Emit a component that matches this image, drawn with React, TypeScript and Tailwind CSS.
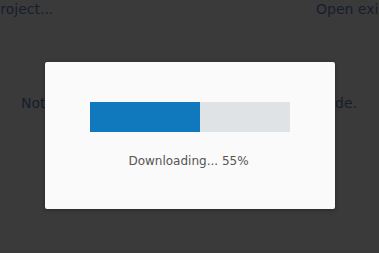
import React from "react";

export default function App() {
  const pct = 55;
  return (
    <div
      className="relative w-[379px] h-[253px] overflow-hidden bg-[#3a3a3a] text-[#161e2e]"
      style={{ fontFamily: '"DejaVu Sans", Verdana, sans-serif' }}
    >
      <div className="flex text-[14px] leading-[18px] whitespace-nowrap">
        <span className="w-[409px] shrink-0 -ml-[93px]">Create new project...</span>
        <span className="shrink-0">Open existing project...</span>
      </div>
      <div className="mt-[76px] flex justify-between pl-[21px] pr-[22px] text-[14px] leading-[18px] whitespace-nowrap">
        <span>Note: this feature needs</span>
        <span>online mode.</span>
      </div>

      <div className="absolute inset-0 flex items-start justify-center pt-[62px]">
        <div className="w-[290px] h-[147px] bg-[#fafafa] rounded-[2px] shadow-[0_1px_4px_rgba(0,0,0,0.35)] flex flex-col items-center pt-[40px]">
          <div className="w-[200px] h-[30px] bg-[#e0e3e6] flex">
            <div className="h-full bg-[#1078bd]" style={{ width: `${pct}%` }} />
          </div>
          <div className="mt-[21px] -ml-[2px] text-[12px] leading-[16px] text-[#555555]">
            Downloading... {pct}%
          </div>
        </div>
      </div>
    </div>
  );
}
